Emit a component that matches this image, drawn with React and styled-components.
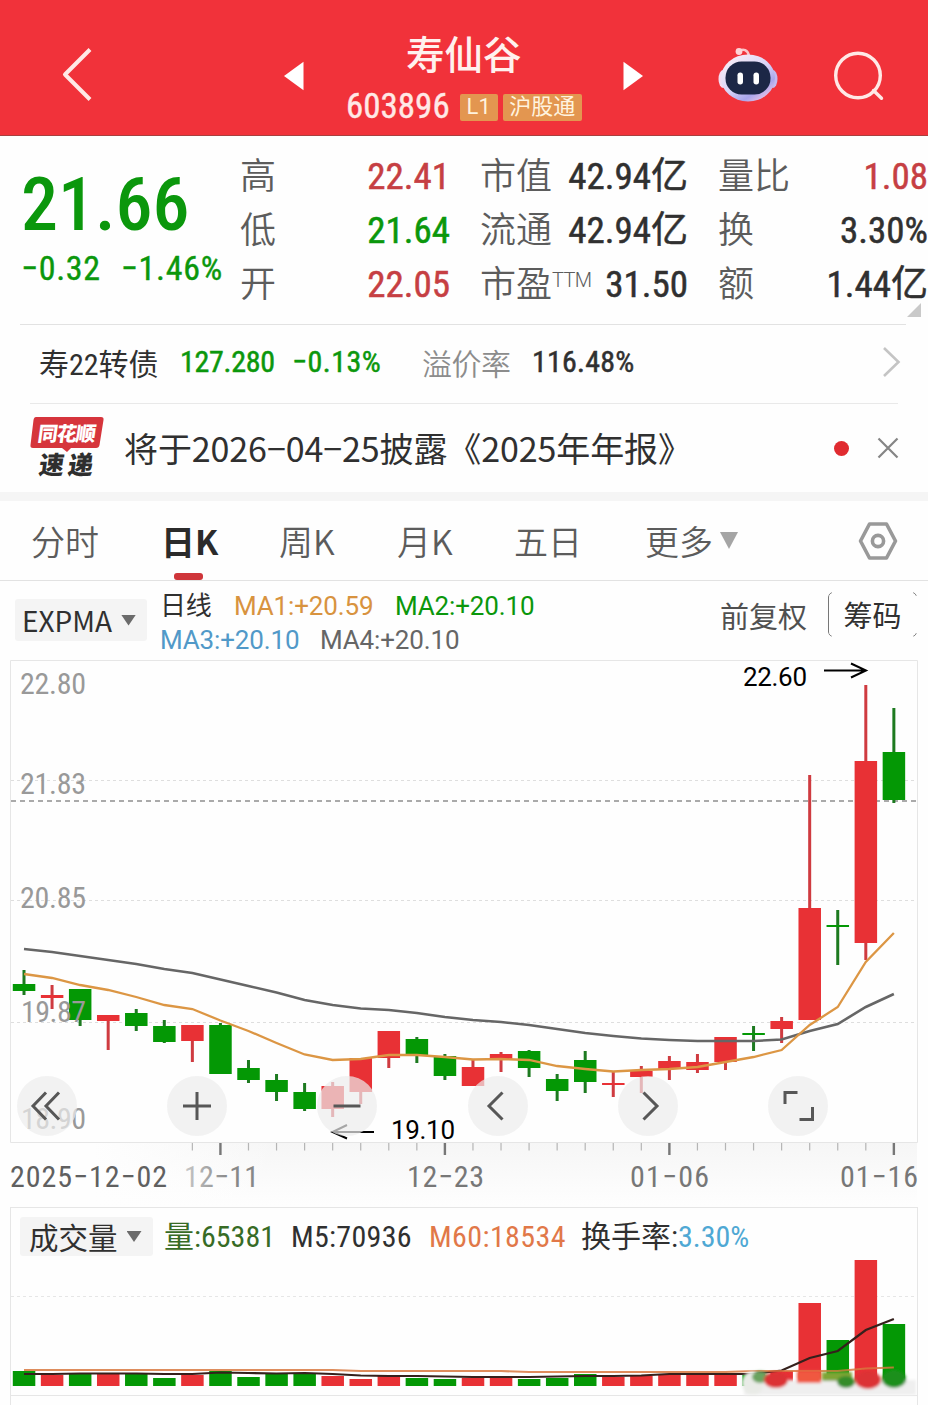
import styled, { createGlobalStyle } from "styled-components";

const GREEN = "#0b970c";
const RED = "#c63f43";

const quotes = [
  [
    { label: "高", value: "22.41", color: RED },
    { label: "低", value: "21.64", color: GREEN },
    { label: "开", value: "22.05", color: RED },
  ],
  [
    { label: "市值", value: "42.94亿" },
    { label: "流通", value: "42.94亿" },
    { label: "市盈", sup: "TTM", value: "31.50" },
  ],
  [
    { label: "量比", value: "1.08", color: RED },
    { label: "换", value: "3.30%" },
    { label: "额", value: "1.44亿" },
  ],
];

const tabs = ["分时", "日K", "周K", "月K", "五日", "更多"];

// [up, body top, body bottom, wick top, wick bottom]
const candles = [
  [0, 984, 991, 970, 995],
  [1, 995, 998, 985, 1009],
  [0, 989, 1020, 989, 1026],
  [1, 1015, 1021, 1015, 1050],
  [0, 1013, 1026, 1009, 1031],
  [0, 1026, 1042, 1020, 1043],
  [1, 1025, 1041, 1025, 1062],
  [0, 1025, 1074, 1023, 1074],
  [0, 1068, 1080, 1060, 1083],
  [0, 1080, 1092, 1074, 1101],
  [0, 1092, 1109, 1083, 1111],
  [1, 1086, 1109, 1082, 1117],
  [1, 1058, 1092, 1058, 1104],
  [1, 1031, 1058, 1031, 1068],
  [0, 1039, 1056, 1037, 1063],
  [0, 1056, 1076, 1054, 1080],
  [1, 1067, 1086, 1060, 1086],
  [1, 1054, 1059, 1052, 1072],
  [0, 1051, 1068, 1050, 1077],
  [0, 1079, 1091, 1074, 1101],
  [0, 1060, 1082, 1051, 1093],
  [1, 1083, 1085, 1072, 1097],
  [1, 1071, 1077, 1066, 1093],
  [1, 1061, 1069, 1056, 1080],
  [1, 1062, 1070, 1054, 1073],
  [1, 1037, 1062, 1037, 1070],
  [0, 1033, 1035, 1026, 1051],
  [1, 1021, 1029, 1017, 1043],
  [1, 908, 1020, 775, 1020],
  [0, 925, 927, 910, 965],
  [1, 761, 943, 685, 960],
  [0, 752, 800, 708, 803],
];

const slowLine = [
  949, 952, 956, 960, 964, 969, 973, 979.5, 986, 992.5, 1000, 1005, 1008.5, 1010, 1013, 1017,
  1020, 1022, 1025, 1029, 1033, 1036, 1038.5, 1040, 1041, 1041, 1041, 1039.5, 1031, 1024, 1007, 994,
];

const fastLine = [
  974, 978, 985, 990, 997, 1005, 1009, 1020.5, 1031, 1043, 1054.5, 1060, 1059, 1055, 1055, 1057,
  1059.5, 1059, 1060, 1066, 1069, 1071.5, 1070, 1069, 1067, 1062, 1057, 1050, 1025, 1007, 962, 933,
];

const volumes = [
  1371, 1375, 1374, 1373, 1374, 1378, 1375, 1371, 1377, 1374, 1374, 1376, 1379, 1376, 1378, 1379,
  1378, 1378, 1379, 1378, 1374, 1377, 1376, 1375, 1374, 1374, 1374, 1371, 1303, 1340, 1260, 1324,
];

const volM5 = [
  1374, 1374, 1373.5, 1373.5, 1373.5, 1374, 1374, 1372.5, 1373, 1373.5, 1373, 1374, 1375.5, 1376, 1376, 1376.5,
  1377, 1377, 1377, 1376.5, 1376, 1376, 1375.5, 1374, 1374, 1374, 1374, 1370.5, 1358, 1351, 1330, 1319,
];

const volM60 = volumes.map((_, i) => (i < 12 ? 1370 : i < 18 ? 1371 : i < 26 ? 1372 : i < 30 ? 1371 : 1398.5 - i));

const controls = [
  "M29 16.500L16 30L29 43.500M42 16.500L29 30L42 43.500",
  "M30 16V44M16 30H44",
  "M16.500 30H43.500",
  "M34.500 16.500L21 30L34.500 43.500",
  "M25.500 16.500L39 30L25.500 43.500",
  "M17 28V16.500H29.500M31.500 43.500H44.500V31",
];

const cx = (i) => 24 + i * 28.06;
const toPoints = (ys) => ys.map((y, i) => `${cx(i)},${y}`).join(" ");

export default function App() {
  return (
    <Page>
      <GlobalStyle />
      <Header>
        <svg width="40" height="60" viewBox="0 2 40 60" fill="none" stroke="#ffe9e6" strokeWidth="4">
          <path d="M33 5.500L8 30.500L33 55.500" strokeLinejoin="round" />
        </svg>
        <svg width="20" height="30" viewBox="0 0 20 30">
          <path d="M0 15L19.500 .8V29.200Z" fill="#fff" />
        </svg>
        <Title>
          <StockName>寿仙谷</StockName>
          <StockCode>
            603896
            <Badge $w={38}>L1</Badge>
            <Badge $w={79}>沪股通</Badge>
          </StockCode>
        </Title>
        <svg width="20" height="30" viewBox="0 0 20 30">
          <path d="M20 15L.5 .8V29.200Z" fill="#fff" />
        </svg>
        <RobotIcon />
        <svg width="54" height="54" viewBox="0 0 54 54" fill="none" stroke="#ffe9e6" strokeWidth="3.4">
          <circle cx="26" cy="26.500" r="22.300" />
          <path d="M41.500 41.500L49.500 49.300" strokeLinecap="round" />
        </svg>
      </Header>

      <Quote>
        <div>
          <Price>21.66</Price>
          <Change>
            <span>−0.32</span>
            <span>−1.46%</span>
          </Change>
        </div>
        {quotes.map((col, i) => (
          <QuoteCol key={i}>
            {col.map((q) => (
              <QuoteRow key={q.label}>
                <QuoteLabel>
                  {q.label}
                  {q.sup && <sup>{q.sup}</sup>}
                </QuoteLabel>
                <QuoteValue $color={q.color}>{q.value}</QuoteValue>
              </QuoteRow>
            ))}
          </QuoteCol>
        ))}
        <Corner />
      </Quote>

      <BondRow>
        <BondText $color="#303030">寿22转债</BondText>
        <BondText $color={GREEN} $strong $ls={-0.3}>127.280</BondText>
        <BondText $color={GREEN} $strong $ls={0.5}>−0.13%</BondText>
        <BondText $color="#8c8c8c" $weight={350} $ls={-0.5}>溢价率</BondText>
        <BondText $color="#303030" $strong $ls={0.2}>116.48%</BondText>
        <svg width="20" height="32" viewBox="0 0 20 32" fill="none" stroke="#c4c4c4" strokeWidth="2.6">
          <path d="M2 2L16.500 16L2 30" />
        </svg>
      </BondRow>

      <NewsRow>
        <NewsLogo />
        <NewsText>将于2026−04−25披露《2025年年报》</NewsText>
        <Dot />
        <svg width="22" height="22" viewBox="0 0 22 22" stroke="#858585" strokeWidth="2.200">
          <path d="M1.500 1.500L20.500 20.500M20.500 1.500L1.500 20.500" />
        </svg>
      </NewsRow>

      <Tabs>
        {tabs.map((t) => (
          <Tab key={t} $active={t === "日K"}>
            {t}
            {t === "更多" && <Caret $w={18} $h={17} $color="#a5a5a5" />}
          </Tab>
        ))}
        <svg width="40" height="38" viewBox="0 0 40 38" fill="none" stroke="#999" strokeWidth="3.600">
          <path d="M11.500 2H28.500L37.500 19L28.500 36H11.500L2.500 19Z" strokeLinejoin="round" />
          <circle cx="20" cy="19" r="5.600" />
        </svg>
      </Tabs>

      <Indicators>
        <Picker $w={132} $h={42}>
          EXPMA
          <Caret $w={15} $h={11} $color="#6b6b6b" />
        </Picker>
        <MaList>
          <div>
            <Ma $w={74} $color="#303030">日线</Ma>
            <Ma $w={161} $color="#d8933f">MA1:+20.59</Ma>
            <Ma $color={GREEN}>MA2:+20.10</Ma>
          </div>
          <div>
            <Ma $w={160} $color="#5199c8">MA3:+20.10</Ma>
            <Ma $color="#666">MA4:+20.10</Ma>
          </div>
        </MaList>
        <Adjust>前复权</Adjust>
        <ChipButton>筹码</ChipButton>
      </Indicators>

      <ChartPanel>
        <PriceChart />
        <Controls>
          {controls.map((d, i) => (
            <Control key={i}>
              <svg width="60" height="60" viewBox="0 0 60 60" fill="none" stroke="#575757" strokeWidth="3">
                <path d={d} />
              </svg>
            </Control>
          ))}
        </Controls>
      </ChartPanel>

      <VolumePanel>
        <VolumeHead>
          <Picker $w={133} $h={39} $cjk>
            成交量
            <Caret $w={15} $h={11} $color="#6b6b6b" />
          </Picker>
          <VolText $color="#376b25">量:65381</VolText>
          <VolText $color="#303030" $ls={0.3}>M5:70936</VolText>
          <VolText $color="#e17848" $ls={0.4}>M60:18534</VolText>
          <VolText $color="#303030">
            换手率:<em>3.30%</em>
          </VolText>
        </VolumeHead>
        <VolumeChart />
      </VolumePanel>
      <NextPanel />
    </Page>
  );
}

function RobotIcon() {
  return (
    <svg width="62" height="58" viewBox="0 0 62 58">
      <defs>
        <linearGradient id="shell" x1="0" y1="0" x2="0.800" y2="1">
          <stop offset="0" stopColor="#fff3f6" />
          <stop offset="0.550" stopColor="#d9d4f7" />
          <stop offset="0.800" stopColor="#a9a5ec" />
          <stop offset="1" stopColor="#f4c6e4" />
        </linearGradient>
      </defs>
      <path d="M22 4.500C26 1 31 3 32 9" fill="none" stroke="#fbc4c9" strokeWidth="2.500" />
      <circle cx="22" cy="4.500" r="3.400" fill="#ffd3d6" />
      <ellipse cx="6" cy="32" rx="4.500" ry="9" fill="#f3dcf1" />
      <ellipse cx="56" cy="32" rx="4.500" ry="9" fill="#c3b9f0" />
      <ellipse cx="31" cy="31" rx="27" ry="23.500" fill="url(#shell)" />
      <rect x="8.500" y="14.500" width="45" height="33" rx="16" fill="#1c2746" />
      <rect x="20.500" y="25.500" width="5.500" height="12" rx="2.700" fill="#fff" />
      <rect x="36.500" y="25.500" width="5.500" height="12" rx="2.700" fill="#fff" />
    </svg>
  );
}

function NewsLogo() {
  return (
    <svg width="74" height="64" viewBox="0 0 74 64">
      <path d="M6 1H71Q74 1 73.500 4L69.500 29Q69 32 66 32H41L37 36L32 32H3Q0 32 .5 29L3.500 4Q4 1 6 1Z" fill="#d6353c" />
      <g fontFamily="Noto Sans CJK SC, sans-serif" fontWeight="900">
        <text transform="translate(7 24.500) skewX(-8)" fontSize="20" fill="#fff" textLength="58">
          同花顺
        </text>
        <text transform="translate(8 58) skewX(-8)" fontSize="25" fill="#2e2e2e" textLength="54">
          速递
        </text>
      </g>
    </svg>
  );
}

function PriceChart() {
  return (
    <svg width="928" height="546" viewBox="0 660 928 546">
      <defs>
        <linearGradient id="axisX" x1="0" x2="1">
          <stop offset="0.100" stopColor="#fefefe" />
          <stop offset="0.300" stopColor="#fefefe" stopOpacity="0" />
        </linearGradient>
        <linearGradient id="axisY" x1="0" y1="0" x2="0" y2="1">
          <stop offset="0" stopColor="#f6f6f6" />
          <stop offset="1" stopColor="#fefefe" />
        </linearGradient>
        <linearGradient id="fade" x1="0" x2="1">
          <stop offset="0" stopColor="#c8c8c8" />
          <stop offset="0.600" stopColor="#888" />
        </linearGradient>
      </defs>
      <rect x="0" y="1143" width="917" height="62" fill="url(#axisY)" />
      <rect x="0" y="1143" width="928" height="62" fill="url(#axisX)" />
      <path d="M10.500 1142.500V660.500H917.500V1142.500Z" fill="none" stroke="#e6e6e6" />
      {[780.5, 900.5, 1022.5].map((y) => (
        <line key={y} x1="11" x2="917" y1={y} y2={y} stroke="#dedede" strokeDasharray="3 3" />
      ))}
      <line x1="11" x2="917" y1="801" y2="801" stroke="#8f8f8f" strokeWidth="1.400" strokeDasharray="5 4" />

      {candles.map(([up, top, bottom, high, low], i) => (
        <g key={i} fill={up ? "#e83135" : "#049805"}>
          <rect x={cx(i) - 1.5} y={high} width="3" height={low - high} fill={up ? "#cf3b40" : "#1d7a20"} />
          <rect x={cx(i) - 11.2} y={top} width="22.500" height={bottom - top} />
        </g>
      ))}
      <polyline points={toPoints(slowLine)} fill="none" stroke="#666" strokeWidth="2.600" />
      <polyline points={toPoints(fastLine)} fill="none" stroke="#dc9644" strokeWidth="2.300" />

      <g fontFamily="Roboto Condensed" fontSize="30" fill="#999">
        <text x="20" y="694" textLength="66">22.80</text>
        <text x="20" y="794" textLength="66">21.83</text>
        <text x="20" y="908" textLength="66">20.85</text>
        <text x="21" y="1022" textLength="65">19.87</text>
        <text x="21" y="1129" textLength="65">18.90</text>
      </g>
      <g fontFamily="Roboto" fontSize="26" fill="#000" fontWeight="400">
        <text x="743" y="685.500" textLength="64">22.60</text>
        <text x="391" y="1139" textLength="64">19.10</text>
      </g>
      <g fill="none" stroke="#000" strokeWidth="2">
        <path d="M824 670.500H865M851 663.500L866 670.500L851 677.500" />
        <path d="M374 1132H333M347 1125L332.500 1132L347 1138.500" />
      </g>

      {candles.map((_, i) => {
        const major = i % 8 === 7;
        return (
          i > 5 && (
            <line
              key={i}
              x1={cx(i)}
              x2={cx(i)}
              y1="1143"
              y2={major ? 1155 : 1150.5}
              stroke={major ? "#777" : "#b5b5b5"}
              strokeWidth={major ? 2.4 : 1.2}
            />
          )
        );
      })}
      <g fontFamily="Roboto Condensed" fontSize="30" fill="#777">
        <text x="10" y="1186.500" fill="#606060" textLength="157">2025−12−02</text>
        <text x="184" y="1186.500" fill="url(#fade)" textLength="75">12−11</text>
        <text x="407" y="1186.500" textLength="77">12−23</text>
        <text x="630" y="1186.500" textLength="79">01−06</text>
        <text x="840" y="1186.500" textLength="78">01−16</text>
      </g>
    </svg>
  );
}

function VolumeChart() {
  return (
    <svg width="928" height="132" viewBox="0 1265 928 132" overflow="visible">
      <defs>
        <filter id="soft" x="-20%" y="-50%" width="140%" height="200%">
          <feGaussianBlur stdDeviation="1.800" />
        </filter>
      </defs>
      <line x1="11" x2="917" y1="1296.500" y2="1296.500" stroke="#e6e6e6" strokeDasharray="3 3" />
      {volumes.map((top, i) => (
        <rect
          key={i}
          x={cx(i) - 11.2}
          y={top}
          width="22.500"
          height={1386 - top}
          fill={candles[i][0] ? "#e83135" : "#049805"}
        />
      ))}
      <polyline points={toPoints(volM5)} fill="none" stroke="#35201c" strokeWidth="2.200" />
      <polyline points={toPoints(volM60)} fill="none" stroke="#d8783f" strokeOpacity="0.850" strokeWidth="2.200" />
      {/* smudged strip over the last bars */}
      <g filter="url(#soft)">
        <rect x="744" y="1380" width="172" height="15" fill="#efefef" />
        <ellipse cx="753" cy="1383" rx="11" ry="12" fill="#e9ebe7" />
        <ellipse cx="760" cy="1377" rx="8" ry="6" fill="#6ba35f" />
        <ellipse cx="776" cy="1380" rx="12" ry="8" fill="#dc3236" />
        <rect x="797" y="1371" width="24" height="12" fill="#f0583f" />
        <rect x="822" y="1372" width="30" height="9" fill="#7fa535" />
        <ellipse cx="846" cy="1382" rx="9" ry="6" fill="#358c2c" />
        <ellipse cx="868" cy="1380" rx="13" ry="9" fill="#dc3236" />
        <ellipse cx="894" cy="1379" rx="12" ry="9" fill="#1f8f1f" />
      </g>
    </svg>
  );
}

const GlobalStyle = createGlobalStyle`
  body {
    margin: 0;
    background: #fff;
    overflow: hidden;
  }
  * {
    box-sizing: border-box;
  }
  svg {
    display: block;
    flex: none;
  }
`;

const Page = styled.div`
  width: 928px;
  height: 1405px;
  overflow: hidden;
  background: #fefefe;
  color: #303030;
  font-family: "Roboto Condensed", "Noto Sans CJK SC", sans-serif;
  white-space: nowrap;
`;

const Header = styled.header`
  display: grid;
  grid-template-columns: 227px 62px 277px 94px 115px 54px;
  align-items: center;
  height: 136px;
  padding: 16px 0 0 57px;
  background: #f1323a;
  border-bottom: 1px solid #a8403f;
`;

const Title = styled.div`
  padding-top: 6px;
`;

const StockName = styled.div`
  padding-left: 60px;
  font: 500 38.5px/50px "Noto Sans CJK SC", sans-serif;
  color: #fff1ee;
`;

const StockCode = styled.div`
  display: flex;
  align-items: center;
  gap: 5px;
  padding-top: 7px;
  font-size: 35px;
  line-height: 46px;
  color: #ffe9e6;
  -webkit-text-stroke: 0.4px currentColor;
`;

const Badge = styled.span`
  width: ${(p) => p.$w}px;
  height: 27px;
  border-radius: 2px;
  background: #e39650;
  color: #fff3df;
  font: 400 22px/26px Roboto, "Noto Sans CJK SC", sans-serif;
  text-align: center;
  -webkit-text-stroke: 0;
  &:first-of-type {
    margin-left: 5px;
  }
`;

const Quote = styled.section`
  position: relative;
  display: grid;
  grid-template-columns: 188px 210px 208px 210px;
  column-gap: 30px;
  height: 188px;
  padding: 14px 0 0 22px;
  &::after {
    content: "";
    position: absolute;
    left: 20px;
    right: 22px;
    bottom: -1px;
    border-bottom: 1px solid #e2e2e2;
  }
`;

const Price = styled.div`
  margin-left: -1px;
  padding-top: 10px;
  font-size: 74px;
  font-weight: 500;
  line-height: 90px;
  color: ${GREEN};
`;

const Change = styled.div`
  display: flex;
  gap: 20px;
  margin-left: -1px;
  font-size: 34px;
  line-height: 36px;
  letter-spacing: 0.7px;
  color: ${GREEN};
  -webkit-text-stroke: 0.4px currentColor;
`;

const QuoteCol = styled.div`
  display: grid;
  grid-auto-rows: 54px;
`;

const QuoteRow = styled.div`
  display: flex;
  justify-content: space-between;
  align-items: center;
  line-height: 54px;
`;

const QuoteLabel = styled.span`
  font-size: 36px;
  font-weight: 350;
  color: #5c5c5c;
  sup {
    display: inline-block;
    font: 300 20px/20px Roboto, sans-serif;
    letter-spacing: -0.6px;
    vertical-align: 10px;
  }
`;

const QuoteValue = styled.span`
  font-size: 37px;
  color: ${(p) => p.$color || "#303030"};
  -webkit-text-stroke: 0.5px currentColor;
`;

const Corner = styled.i`
  position: absolute;
  right: 7px;
  bottom: 7px;
  border-left: 14px solid transparent;
  border-bottom: 14px solid #c9c9c9;
`;

const BondRow = styled.section`
  display: grid;
  grid-template-columns: 141px 112px 130px 110px 350px 20px;
  align-items: center;
  height: 80px;
  margin: 0 30px;
  padding: 0 0 4px 9px;
  border-bottom: 1px solid #e9e9e9;
`;

const BondText = styled.span`
  font-size: 30px;
  font-weight: ${(p) => p.$weight || 400};
  letter-spacing: ${(p) => p.$ls || 0}px;
  color: ${(p) => p.$color};
  -webkit-text-stroke: ${(p) => (p.$strong ? "0.5px currentColor" : "0")};
`;

const NewsRow = styled.section`
  display: grid;
  grid-template-columns: 94px 710px 43px 22px;
  align-items: center;
  height: 88px;
  padding-left: 30px;
`;

const NewsText = styled.span`
  font: 400 34px/60px "Noto Sans CJK SC", sans-serif;
  letter-spacing: -0.1px;
`;

const Dot = styled.i`
  width: 15px;
  height: 15px;
  border-radius: 50%;
  background: #e02b30;
`;

const Tabs = styled.nav`
  display: grid;
  grid-template-columns: 130px 118px 118px 117px 131px 213px 40px;
  align-items: center;
  height: 89px;
  padding-left: 31px;
  border-top: 9px solid #f5f5f5;
  border-bottom: 1px solid #e2e2e2;
`;

const Tab = styled.span`
  position: relative;
  display: flex;
  align-items: center;
  gap: 7px;
  font: ${(p) => (p.$active ? 700 : 350)} 34px/79px "Noto Sans CJK SC", sans-serif;
  color: ${(p) => (p.$active ? "#2b2b2b" : "#5c5c5c")};
  &::after {
    content: "";
    display: ${(p) => (p.$active ? "block" : "none")};
    position: absolute;
    left: 13px;
    bottom: 0;
    width: 29px;
    height: 7px;
    border-radius: 3px;
    background: #cf353a;
  }
`;

const Caret = styled.i`
  width: ${(p) => p.$w}px;
  height: ${(p) => p.$h}px;
  background: ${(p) => p.$color};
  clip-path: polygon(0 0, 100% 0, 50% 100%);
`;

const Indicators = styled.section`
  display: grid;
  grid-template-columns: 145px 560px 108px 89px;
  height: 79px;
  padding-left: 15px;
`;

const Picker = styled.div`
  display: flex;
  align-items: center;
  gap: 9px;
  width: ${(p) => p.$w}px;
  height: ${(p) => p.$h}px;
  margin-top: ${(p) => (p.$cjk ? 0 : 18)}px;
  padding-left: ${(p) => (p.$cjk ? 9 : 7)}px;
  border-radius: 3px;
  background: #f4f4f4;
  font: 400 ${(p) => (p.$cjk ? 29.5 : 28)}px/39px "Noto Sans CJK SC", sans-serif;
`;

const MaList = styled.div`
  padding-top: 8px;
  div {
    display: flex;
    height: 34px;
  }
`;

const Ma = styled.span`
  width: ${(p) => p.$w || 140}px;
  font: 400 26px/34px Roboto, "Noto Sans CJK SC", sans-serif;
  letter-spacing: -0.15px;
  color: ${(p) => p.$color};
`;

const Adjust = styled.span`
  font-size: 29px;
  line-height: 74px;
  color: #505050;
`;

/* only the left edge and the right corners of the outline are inked */
const ChipButton = styled.button`
  position: relative;
  height: 45px;
  margin-top: 11px;
  padding: 0;
  border: 0;
  background: none;
  font: 400 29px/45px "Noto Sans CJK SC", sans-serif;
  color: #303030;
  &::before {
    content: "";
    position: absolute;
    inset: 0;
    border: 1.5px solid #777;
    border-radius: 5px;
    mask: linear-gradient(#000, #000) 0 0 / 4px 100% no-repeat,
      linear-gradient(#000, #000) 100% 0 / 4px 4px no-repeat,
      linear-gradient(#000, #000) 100% 100% / 4px 4px no-repeat;
  }
`;

const ChartPanel = styled.section`
  position: relative;
  height: 547px;
`;

const Controls = styled.div`
  position: absolute;
  left: 17px;
  top: 416px;
  display: flex;
  gap: 90.200px;
`;

const Control = styled.button`
  width: 60px;
  height: 60px;
  padding: 0;
  border: 0;
  border-radius: 50%;
  background: rgba(237, 237, 237, 0.7);
`;

const VolumePanel = styled.section`
  height: 189px;
  margin: 0 10px;
  border: 1px solid #e6e6e6;
  & > svg {
    margin-left: -11px;
  }
`;

const VolumeHead = styled.div`
  display: grid;
  grid-template-columns: 144px 127px 138px 152px 180px;
  align-items: center;
  height: 57px;
  padding-left: 9px;
`;

const VolText = styled.span`
  font-size: 30px;
  line-height: 40px;
  letter-spacing: ${(p) => p.$ls || 0}px;
  color: ${(p) => p.$color};
  em {
    font-style: normal;
    color: #4fa8d4;
  }
`;

const NextPanel = styled.section`
  height: 20px;
  margin: 0 10px;
  border: 1px solid #e6e6e6;
  border-top: 0;
`;
